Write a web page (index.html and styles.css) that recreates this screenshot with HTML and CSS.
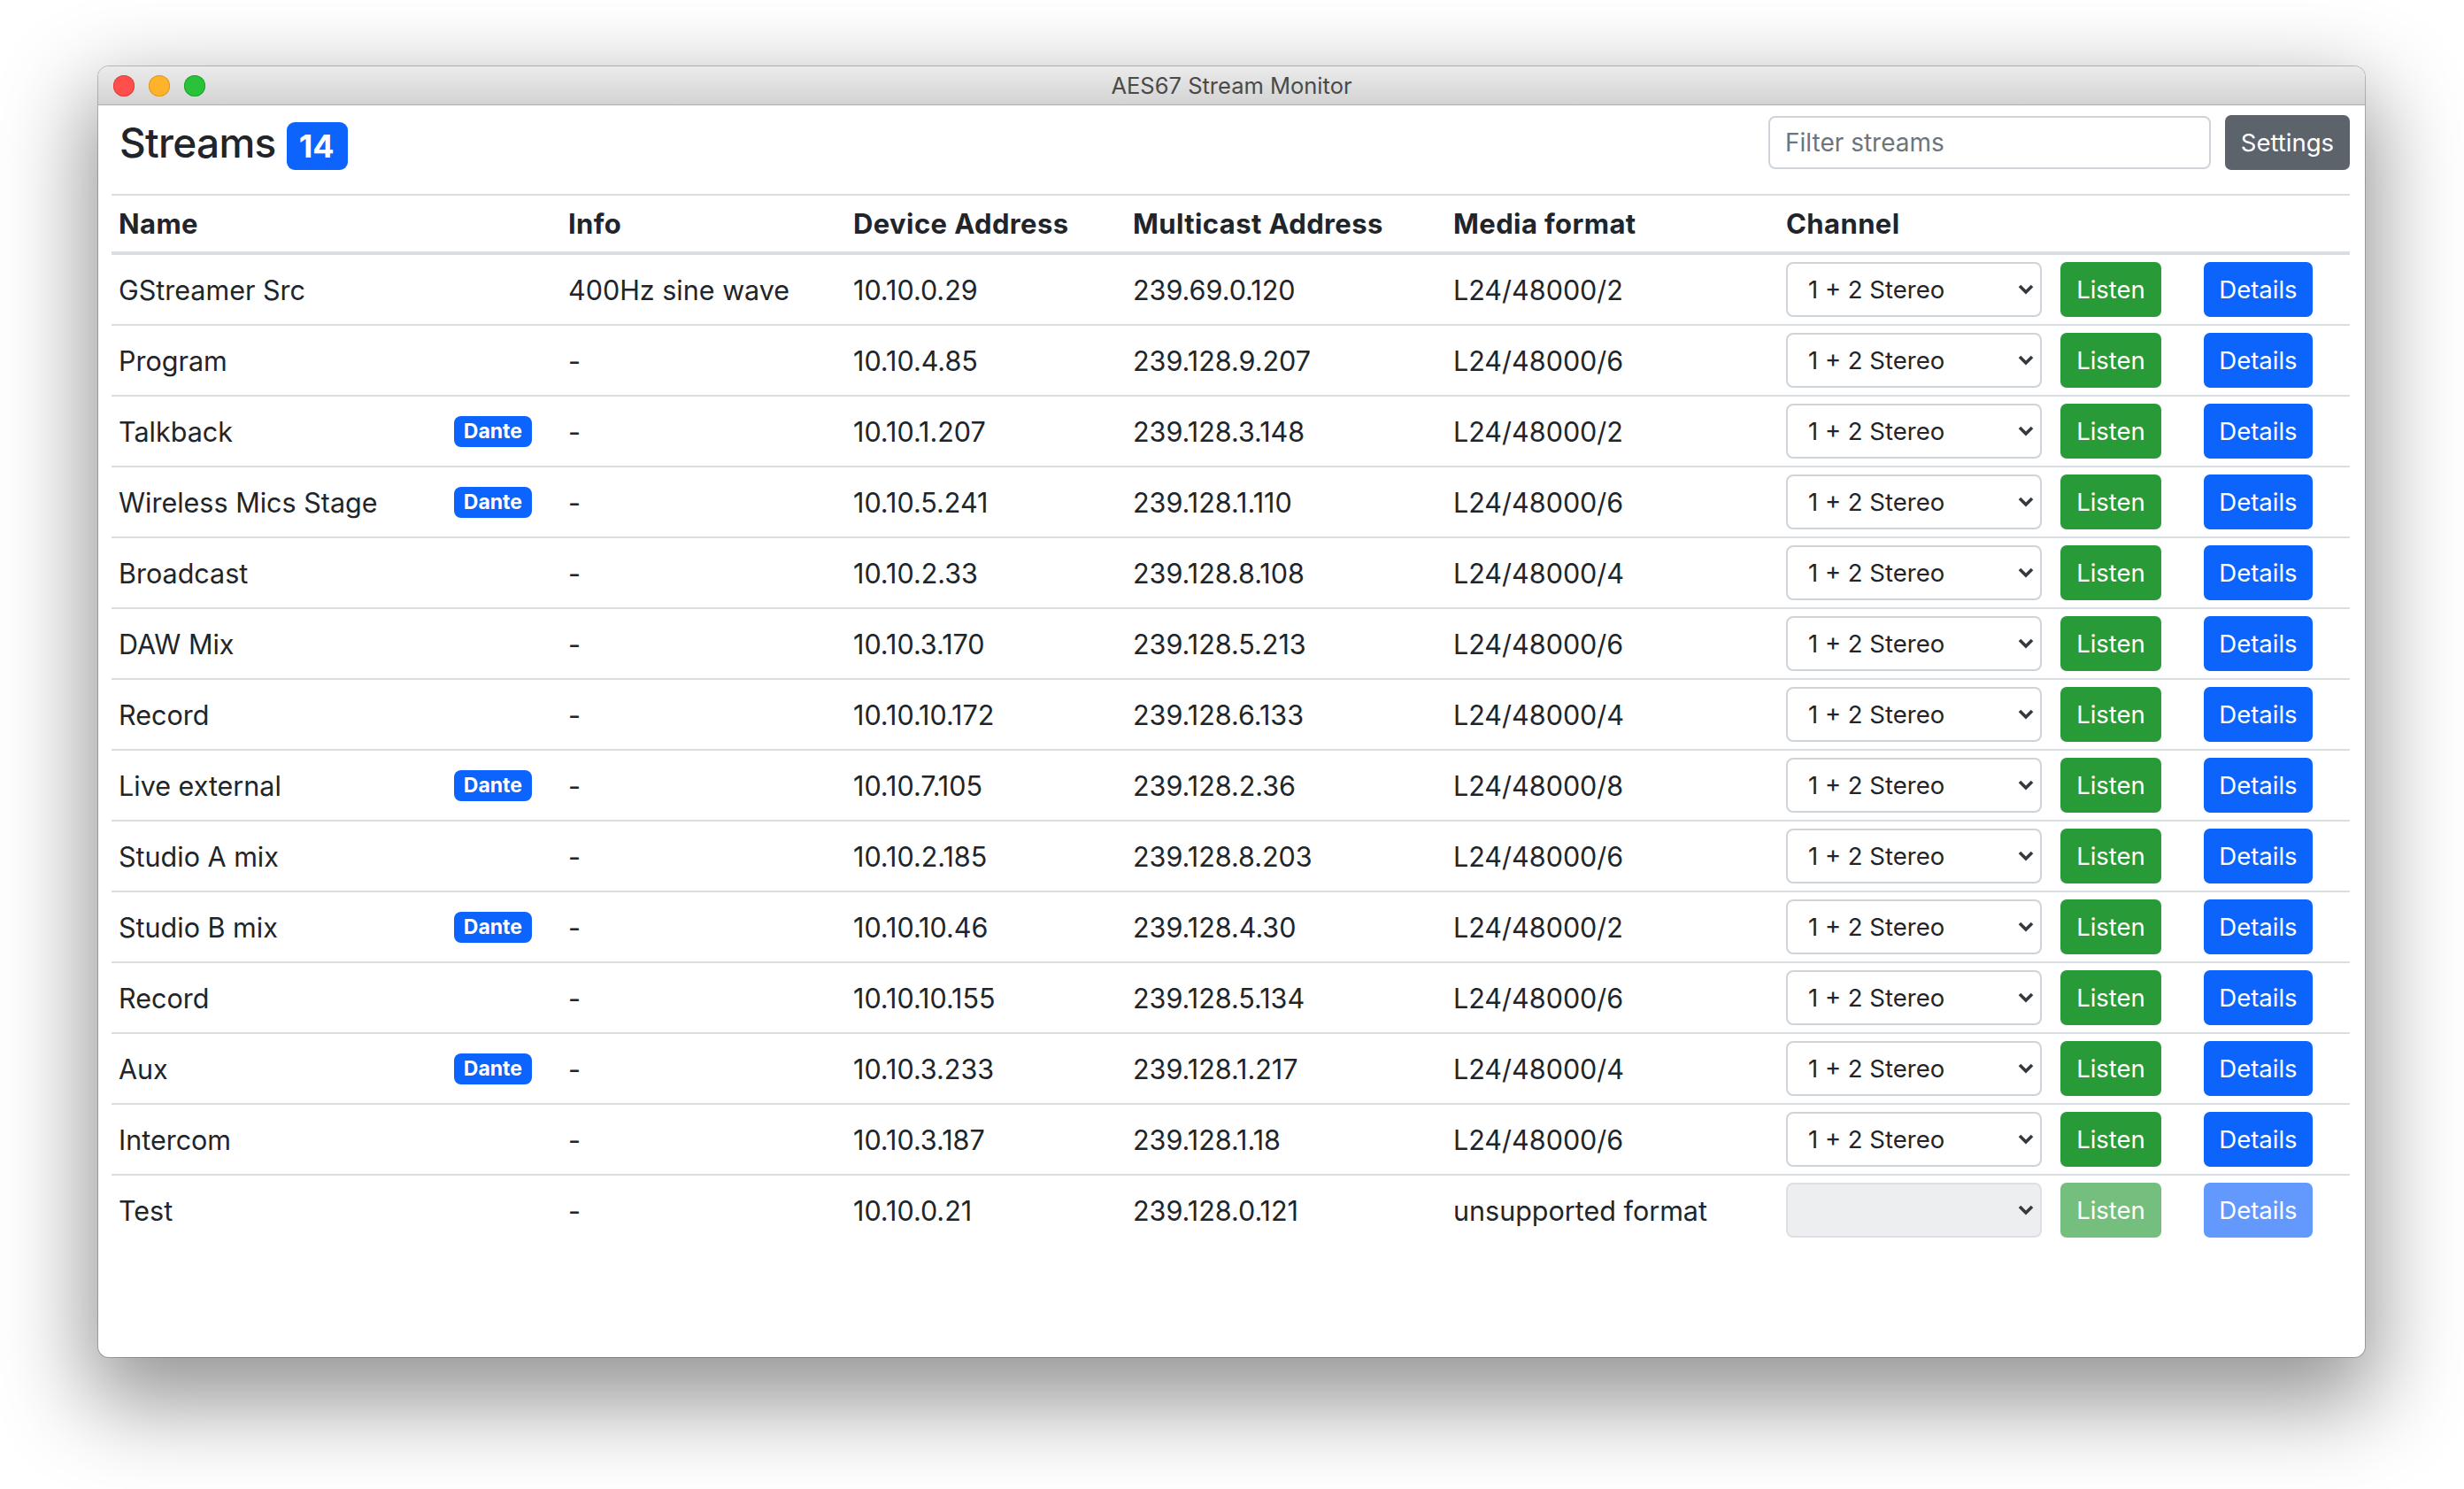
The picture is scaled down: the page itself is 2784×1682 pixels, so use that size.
FILE: index.html
```html
<!DOCTYPE html>
<html lang="en">
<head>
<meta charset="utf-8">
<title>AES67 Stream Monitor</title>
<link rel="stylesheet" href="styles.css">
</head>
<body>
<div class="window">
  <div class="titlebar">
    <div class="lights">
      <span class="light red"></span>
      <span class="light yellow"></span>
      <span class="light green"></span>
    </div>
    <div class="wintitle">AES67 Stream Monitor</div>
    <div></div>
  </div>
  <div class="content">
    <div class="header">
      <h1 class="page-title">Streams<span class="count">14</span></h1>
      <div class="tools">
        <input class="filter" type="text" placeholder="Filter streams">
        <button class="btn settings">Settings</button>
      </div>
    </div>
    <table class="streams">
      <colgroup>
        <col class="c-name"><col class="c-info"><col class="c-dev"><col class="c-mc"><col class="c-media"><col class="c-chan">
      </colgroup>
      <thead>
        <tr><th>Name</th><th>Info</th><th>Device Address</th><th>Multicast Address</th><th>Media format</th><th>Channel</th></tr>
      </thead>
      <tbody>
        <tr>
          <td><div class="name">GStreamer Src</div></td><td>400Hz sine wave</td><td>10.10.0.29</td><td>239.69.0.120</td><td>L24/48000/2</td>
          <td><div class="actions"><div class="select-wrap"><select><option>1 + 2 Stereo</option></select><svg class="chev" viewBox="0 0 18 12"><polyline points="2,2 9,9 16,2"/></svg></div><button class="btn listen">Listen</button><button class="btn details">Details</button></div></td>
        </tr>
        <tr>
          <td><div class="name">Program</div></td><td>-</td><td>10.10.4.85</td><td>239.128.9.207</td><td>L24/48000/6</td>
          <td><div class="actions"><div class="select-wrap"><select><option>1 + 2 Stereo</option></select><svg class="chev" viewBox="0 0 18 12"><polyline points="2,2 9,9 16,2"/></svg></div><button class="btn listen">Listen</button><button class="btn details">Details</button></div></td>
        </tr>
        <tr>
          <td><div class="name">Talkback<span class="dante">Dante</span></div></td><td>-</td><td>10.10.1.207</td><td>239.128.3.148</td><td>L24/48000/2</td>
          <td><div class="actions"><div class="select-wrap"><select><option>1 + 2 Stereo</option></select><svg class="chev" viewBox="0 0 18 12"><polyline points="2,2 9,9 16,2"/></svg></div><button class="btn listen">Listen</button><button class="btn details">Details</button></div></td>
        </tr>
        <tr>
          <td><div class="name">Wireless Mics Stage<span class="dante">Dante</span></div></td><td>-</td><td>10.10.5.241</td><td>239.128.1.110</td><td>L24/48000/6</td>
          <td><div class="actions"><div class="select-wrap"><select><option>1 + 2 Stereo</option></select><svg class="chev" viewBox="0 0 18 12"><polyline points="2,2 9,9 16,2"/></svg></div><button class="btn listen">Listen</button><button class="btn details">Details</button></div></td>
        </tr>
        <tr>
          <td><div class="name">Broadcast</div></td><td>-</td><td>10.10.2.33</td><td>239.128.8.108</td><td>L24/48000/4</td>
          <td><div class="actions"><div class="select-wrap"><select><option>1 + 2 Stereo</option></select><svg class="chev" viewBox="0 0 18 12"><polyline points="2,2 9,9 16,2"/></svg></div><button class="btn listen">Listen</button><button class="btn details">Details</button></div></td>
        </tr>
        <tr>
          <td><div class="name">DAW Mix</div></td><td>-</td><td>10.10.3.170</td><td>239.128.5.213</td><td>L24/48000/6</td>
          <td><div class="actions"><div class="select-wrap"><select><option>1 + 2 Stereo</option></select><svg class="chev" viewBox="0 0 18 12"><polyline points="2,2 9,9 16,2"/></svg></div><button class="btn listen">Listen</button><button class="btn details">Details</button></div></td>
        </tr>
        <tr>
          <td><div class="name">Record</div></td><td>-</td><td>10.10.10.172</td><td>239.128.6.133</td><td>L24/48000/4</td>
          <td><div class="actions"><div class="select-wrap"><select><option>1 + 2 Stereo</option></select><svg class="chev" viewBox="0 0 18 12"><polyline points="2,2 9,9 16,2"/></svg></div><button class="btn listen">Listen</button><button class="btn details">Details</button></div></td>
        </tr>
        <tr>
          <td><div class="name">Live external<span class="dante">Dante</span></div></td><td>-</td><td>10.10.7.105</td><td>239.128.2.36</td><td>L24/48000/8</td>
          <td><div class="actions"><div class="select-wrap"><select><option>1 + 2 Stereo</option></select><svg class="chev" viewBox="0 0 18 12"><polyline points="2,2 9,9 16,2"/></svg></div><button class="btn listen">Listen</button><button class="btn details">Details</button></div></td>
        </tr>
        <tr>
          <td><div class="name">Studio A mix</div></td><td>-</td><td>10.10.2.185</td><td>239.128.8.203</td><td>L24/48000/6</td>
          <td><div class="actions"><div class="select-wrap"><select><option>1 + 2 Stereo</option></select><svg class="chev" viewBox="0 0 18 12"><polyline points="2,2 9,9 16,2"/></svg></div><button class="btn listen">Listen</button><button class="btn details">Details</button></div></td>
        </tr>
        <tr>
          <td><div class="name">Studio B mix<span class="dante">Dante</span></div></td><td>-</td><td>10.10.10.46</td><td>239.128.4.30</td><td>L24/48000/2</td>
          <td><div class="actions"><div class="select-wrap"><select><option>1 + 2 Stereo</option></select><svg class="chev" viewBox="0 0 18 12"><polyline points="2,2 9,9 16,2"/></svg></div><button class="btn listen">Listen</button><button class="btn details">Details</button></div></td>
        </tr>
        <tr>
          <td><div class="name">Record</div></td><td>-</td><td>10.10.10.155</td><td>239.128.5.134</td><td>L24/48000/6</td>
          <td><div class="actions"><div class="select-wrap"><select><option>1 + 2 Stereo</option></select><svg class="chev" viewBox="0 0 18 12"><polyline points="2,2 9,9 16,2"/></svg></div><button class="btn listen">Listen</button><button class="btn details">Details</button></div></td>
        </tr>
        <tr>
          <td><div class="name">Aux<span class="dante">Dante</span></div></td><td>-</td><td>10.10.3.233</td><td>239.128.1.217</td><td>L24/48000/4</td>
          <td><div class="actions"><div class="select-wrap"><select><option>1 + 2 Stereo</option></select><svg class="chev" viewBox="0 0 18 12"><polyline points="2,2 9,9 16,2"/></svg></div><button class="btn listen">Listen</button><button class="btn details">Details</button></div></td>
        </tr>
        <tr>
          <td><div class="name">Intercom</div></td><td>-</td><td>10.10.3.187</td><td>239.128.1.18</td><td>L24/48000/6</td>
          <td><div class="actions"><div class="select-wrap"><select><option>1 + 2 Stereo</option></select><svg class="chev" viewBox="0 0 18 12"><polyline points="2,2 9,9 16,2"/></svg></div><button class="btn listen">Listen</button><button class="btn details">Details</button></div></td>
        </tr>
        <tr>
          <td><div class="name">Test</div></td><td>-</td><td>10.10.0.21</td><td>239.128.0.121</td><td>unsupported format</td>
          <td><div class="actions"><div class="select-wrap"><select disabled><option></option></select><svg class="chev" viewBox="0 0 18 12"><polyline points="2,2 9,9 16,2"/></svg></div><button class="btn listen" disabled>Listen</button><button class="btn details" disabled>Details</button></div></td>
        </tr>
      </tbody>
    </table>
  </div>
</div>
</body>
</html>
```
FILE: styles.css
```css
* { box-sizing: border-box; }
html, body { margin: 0; }
body {
  background: #ffffff;
  padding: 75px 112px 0 111px;
  height: 1682px;
  overflow: hidden;
  font-family: Inter, "Noto Sans", sans-serif;
  color: #212529;
}
.window {
  height: 1458px;
  background: #fff;
  border-radius: 12px;
  overflow: hidden;
  box-shadow: 0 0 0 1px rgba(0,0,0,0.22), 0 40px 100px 12px rgba(0,0,0,0.42);
}
.titlebar {
  height: 44px;
  background: linear-gradient(#ebebeb, #d3d3d3);
  border-bottom: 1px solid #adadad;
  display: grid;
  grid-template-columns: 1fr auto 1fr;
  align-items: center;
  padding: 0 17px;
}
.lights { display: flex; gap: 16px; }
.light { width: 24px; height: 24px; border-radius: 50%; }
.red { background: #fe4f4c; box-shadow: inset 0 0 0 1px #e0403d; }
.yellow { background: #feb32a; box-shadow: inset 0 0 0 1px #dd9a1e; }
.green { background: #29c23a; box-shadow: inset 0 0 0 1px #1ea52c; }
.wintitle { font-size: 25.5px; color: #4a4a4a; }

.content { padding: 11px 17px 0 15px; }
.header {
  display: flex;
  align-items: center;
  justify-content: space-between;
  height: 62px;
  padding-left: 9px;
  margin-bottom: 27px;
}
.page-title {
  margin: 0;
  font-size: 46px;
  font-weight: 500;
  line-height: 62px;
  letter-spacing: -0.015em;
  color: #212529;
}
.count {
  display: inline-block;
  margin-left: 12px;
  background: #0c64fd;
  color: #fff;
  font-size: 36px;
  font-weight: 700;
  line-height: 1;
  padding: 9px 15px 9px 14px;
  border-radius: 9px;
  letter-spacing: 0;
}
.tools { display: flex; align-items: center; gap: 16px; }
.filter {
  width: 500px;
  height: 60px;
  border: 2px solid #ced4da;
  border-radius: 8px;
  padding: 0 17px;
  font-family: inherit;
  font-size: 28px;
  color: #212529;
  outline: none;
}
.filter::placeholder { color: #6c757d; }
.btn {
  height: 62px;
  border: 0;
  border-radius: 7px;
  color: #fff;
  font-family: inherit;
  font-size: 27.5px;
  padding: 0;
}
.settings { width: 141px; background: #5c636a; }

.streams {
  width: 100%;
  border-collapse: separate;
  border-spacing: 0;
  table-layout: fixed;
  font-size: 30.5px;
}
.c-name { width: 508px; }
.c-info { width: 322px; }
.c-dev { width: 316px; }
.c-mc { width: 362px; }
.c-media { width: 376px; }
.c-chan { width: 645px; }
.streams th {
  text-align: left;
  font-size: 31px;
  font-weight: 700;
  letter-spacing: 0.4px;
  line-height: 45px;
  padding: 9px 8px;
  border-top: 2px solid #dadee2;
  border-bottom: 4px solid #dadee2;
}
.streams td {
  padding: 8px;
  line-height: 45px;
  vertical-align: middle;
  white-space: nowrap;
  border-bottom: 2px solid #dadee2;
}
.streams tbody tr:last-child td { border-bottom: 0; }
.name { display: flex; align-items: center; }
.dante {
  margin-left: auto;
  margin-right: 25px;
  background: #0c64fd;
  color: #fff;
  font-size: 23px;
  font-weight: 700;
  line-height: 1;
  padding: 6px 11px;
  border-radius: 8px;
}
.actions { display: flex; align-items: center; }
.select-wrap { position: relative; width: 289px; height: 62px; margin-right: 21px; }
.select-wrap select {
  -webkit-appearance: none;
  appearance: none;
  width: 100%;
  height: 100%;
  border: 2px solid #ced4da;
  border-radius: 8px;
  background: #fff;
  font-family: inherit;
  font-size: 27.5px;
  color: #212529;
  padding: 0 40px 0 23px;
  outline: none;
}
.select-wrap select:disabled { background: #e4e7eb; }
.chev {
  position: absolute;
  right: 9px;
  top: 25px;
  width: 18px;
  height: 12px;
  fill: none;
  stroke: #343a40;
  stroke-width: 3.6;
  pointer-events: none;
}
.listen { width: 114px; background: #289b38; margin-right: 48px; }
.details { width: 123px; background: #0c64fd; }
.listen:disabled { background: #74bf7e; }
.details:disabled { background: #6399fd; }
```
